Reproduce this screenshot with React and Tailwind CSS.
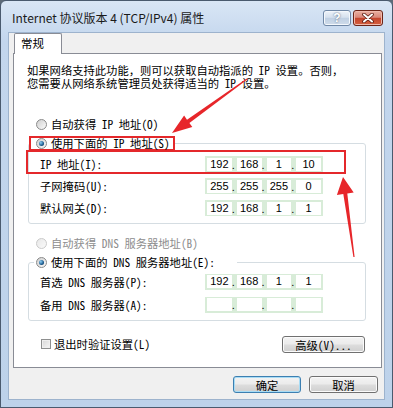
import React from "react";

function Radio({ checked, disabled }) {
  return (
    <span
      className={
        disabled
          ? "w-[11px] h-[11px] rounded-full border border-[#cacaca] bg-gradient-to-br from-[#e8e8e8] to-[#fafafa] shrink-0"
          : "w-[11px] h-[11px] rounded-full border border-[#8a8a8a] bg-gradient-to-br from-[#cfcfcf] to-[#fbfbfb] flex items-center justify-center shrink-0"
      }
    >
      {checked && (
        <span className="w-[5px] h-[5px] rounded-full bg-[radial-gradient(circle_at_35%_35%,#8fd0f5,#1a5a8e_60%,#0b2a47)]" />
      )}
    </span>
  );
}

function IPBox({ v }) {
  const vals = v || ["", "", "", ""];
  return (
    <div className="flex w-[118px] h-[16px] bg-[#d8ecd8] px-[2px] py-[1.5px] font-['Liberation_Sans',sans-serif] text-[11px] leading-[13px] text-black">
      {vals.map((x, i) => (
        <React.Fragment key={i}>
          {i > 0 && (
            <span className="w-[5px] flex items-end leading-[12px]">.</span>
          )}
          <span className="flex-1 bg-white text-center">{x}</span>
        </React.Fragment>
      ))}
    </div>
  );
}

function Row({ label, v, red, h }) {
  return (
    <div className={h ? "relative flex items-center h-[23px] pl-[11px]" : "relative flex items-center h-[22px] pl-[11px]"}>
      <span className="w-[165px] leading-[14px] whitespace-nowrap">{label}</span>
      <IPBox v={v} />
      {red && (
        <span className="absolute -left-[3px] -top-[3px] w-[320px] h-[24px] border-[2.5px] border-[#e4282b]" />
      )}
    </div>
  );
}

function Btn({ children, def, w }) {
  return (
    <div
      className={
        (def
          ? "border-[#3c7fb1] shadow-[inset_0_0_0_1px_#a8dcf5] "
          : "border-[#707070] shadow-[inset_0_0_0_1px_#fbfbfb] ") +
        w +
        " h-[17px] rounded-[3px] border bg-[linear-gradient(#f3f3f3,#ebebeb_48%,#dddddd_52%,#cfcfcf)] flex items-center justify-center text-[11.3px] leading-[14px] text-black"
      }
    >
      {children}
    </div>
  );
}

export default function App() {
  return (
    <div className="w-[393px] h-[408px] relative overflow-hidden bg-[#5e6b78] font-['Noto_Sans_Mono_CJK_SC','Noto_Sans_CJK_SC',sans-serif] text-[11.3px] text-black">
      <div className="w-full h-full flex flex-col rounded-t-[6px] border border-[#4a5a6e] bg-[linear-gradient(#d9e6f5,#c3d6ed_40px,#bdd2ea)]">
        {/* title bar */}
        <div className="h-[31px] flex items-start pl-[11px] pr-[9px] pt-[8px]">
          <span className="flex-1 text-[12px] leading-[18px] text-[#1a1a1a] font-['Noto_Sans_CJK_SC',sans-serif] whitespace-nowrap">
            Internet 协议版本 4 (TCP/IPv4) 属性
          </span>
          <div className="flex gap-[2px] pt-[1px]">
            <div className="w-[28px] h-[16px] rounded-[3px] border border-[#7088a6] bg-[linear-gradient(#eef3f9,#d6e1ee_45%,#c0d0e3_52%,#cfdcea)] shadow-[inset_0_0_0_1px_#f4f8fc] flex items-center justify-center">
              <span className="text-[12px] leading-[12px] font-bold text-white font-['Liberation_Sans',sans-serif] [text-shadow:0_0_2px_#3e526c]">?</span>
            </div>
            <div className="w-[30px] h-[16px] rounded-[3px] border border-[#6b2418] bg-[linear-gradient(#eab0a2,#d9887a_45%,#c4452e_52%,#d5603f)] shadow-[inset_0_0_0_1px_#efb9ac] flex items-center justify-center">
              <svg width="12" height="10" viewBox="0 0 12 10">
                <path d="M2 1.5 L10 8.5 M10 1.5 L2 8.5" stroke="#5a1a10" strokeWidth="3.6" strokeLinecap="round" />
                <path d="M2 1.5 L10 8.5 M10 1.5 L2 8.5" stroke="#ffffff" strokeWidth="2" strokeLinecap="round" />
              </svg>
            </div>
          </div>
        </div>

        {/* client area */}
        <div className="flex-1 mx-[7px] mb-[7px] bg-[#f0f0f0] border border-[#9db3cd] flex flex-col pl-[4px] pr-[2px]">
          {/* tab strip */}
          <div className="flex h-[20px]">
            <div className="relative z-10 ml-[1px] w-[48px] h-[21px] bg-white border border-b-0 border-[#898c95] rounded-t-[2px] pl-[6px] pt-[2px] leading-[14px] text-[11.5px]">
              常规
            </div>
          </div>
          {/* tab panel */}
          <div className="h-[315px] bg-white border border-[#898c95] pl-[13px] pt-[10px] flex flex-col">
            <div className="leading-[13px] whitespace-nowrap">
              <div>如果网络支持此功能，则可以获取自动指派的 IP 设置。否则，</div>
              <div>您需要从网络系统管理员处获得适当的 IP 设置。</div>
            </div>

            <div className="mt-[27px] ml-[9px] flex items-center gap-[4px] h-[14px]">
              <Radio />
              <span className="leading-[14px] whitespace-nowrap">自动获得 IP 地址(O)</span>
            </div>

            <fieldset className="mt-[5px] ml-[1px] w-[338px] border border-[#d5dde2] rounded-[3px] pb-[4px]">
              <legend className="flex items-center h-[15px] leading-[11px]">
                <span className="flex items-center h-[15px] border-2 border-[#e4282b] pl-[5px] pr-[3px] gap-[4px]">
                  <Radio checked />
                  <span className="leading-[11px] whitespace-nowrap">使用下面的 IP 地址(S)</span>
                </span>
              </legend>
              <div className="pt-[2px]">
                <Row label="IP 地址(I):" v={["192", "168", "1", "10"]} red />
                <Row label="子网掩码(U):" v={["255", "255", "255", "0"]} />
                <Row label="默认网关(D):" v={["192", "168", "1", "1"]} />
              </div>
            </fieldset>

            <div className="mt-[12px] ml-[9px] flex items-center gap-[4px] h-[14px]">
              <Radio disabled />
              <span className="leading-[14px] whitespace-nowrap text-[#8d8d8d]">自动获得 DNS 服务器地址(B)</span>
            </div>

            <fieldset className="mt-[5px] ml-[1px] w-[338px] border border-[#d5dde2] rounded-[3px] pb-[4px]">
              <legend className="ml-[5px] pl-[2px] pr-[22px] flex items-center h-[14px] gap-[4px] leading-[14px]">
                <Radio checked />
                <span className="leading-[14px] whitespace-nowrap">使用下面的 DNS 服务器地址(E):</span>
              </legend>
              <div className="pt-[1px]">
                <Row h label="首选 DNS 服务器(P):" v={["192", "168", "1", "1"]} />
                <Row h label="备用 DNS 服务器(A):" />
              </div>
            </fieldset>

            <div className="mt-[15px] ml-[14px] w-[324px] flex items-center justify-between">
              <div className="flex items-center gap-[3px] -mt-[2px]">
                <span className="w-[10px] h-[10px] border border-[#8e8f8f] bg-gradient-to-br from-[#d6d6d6] to-[#f6f6f6] shadow-[inset_0_0_0_1px_#eeeeee]" />
                <span className="leading-[14px] whitespace-nowrap">退出时验证设置(L)</span>
              </div>
              <Btn w="w-[83px]">高级(V)...</Btn>
            </div>
          </div>

          {/* dialog buttons */}
          <div className="mt-[8px] mr-[4px] flex justify-end gap-[8px]">
            <Btn def w="w-[68px]">确定</Btn>
            <Btn w="w-[69px]">取消</Btn>
          </div>
        </div>
      </div>

      {/* red annotation arrows */}
      <svg className="absolute left-0 top-0 pointer-events-none" width="393" height="408" viewBox="0 0 393 408">
        <polygon
          fill="#e7262a"
          points="246.7,78.6 187.0,119.7 184.1,115.6 172,133 192.3,127.0 189.4,122.9 247.3,79.4"
        />
        <polygon
          fill="#e7262a"
          points="354.6,256.9 347.3,193.5 353.7,192.6 343,177 336.9,195.0 343.3,194.1 353.4,257.1"
        />
      </svg>
    </div>
  );
}
